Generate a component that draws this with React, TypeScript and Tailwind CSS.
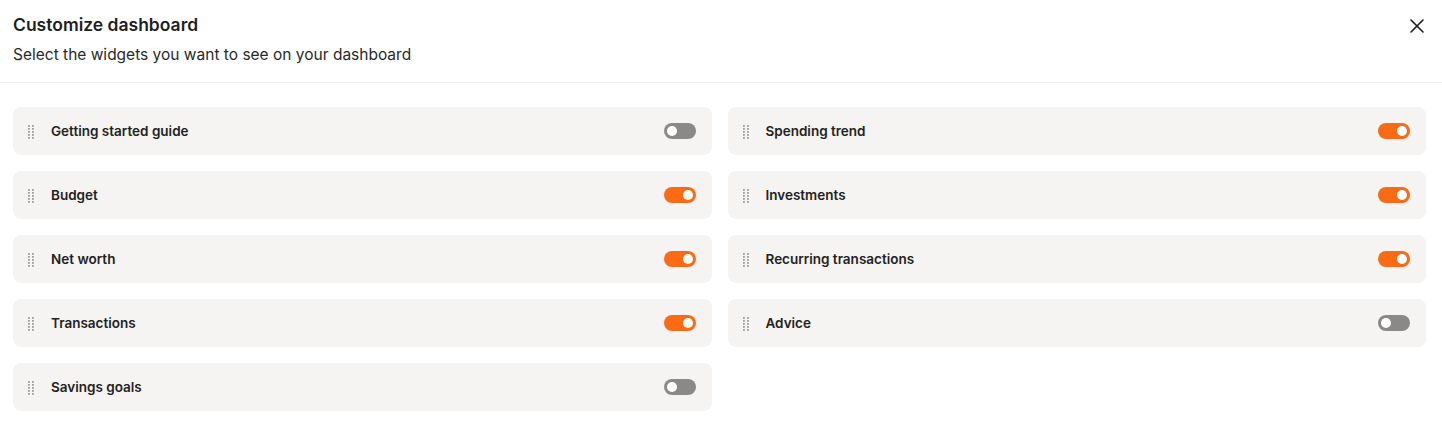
import { X } from "lucide-react";

const left = [
  { name: "Getting started guide", on: false },
  { name: "Budget", on: true },
  { name: "Net worth", on: true },
  { name: "Transactions", on: true },
  { name: "Savings goals", on: false },
];

const right = [
  { name: "Spending trend", on: true },
  { name: "Investments", on: true },
  { name: "Recurring transactions", on: true },
  { name: "Advice", on: false },
];

const DragHandle = () => (
  <svg width="8" height="15" viewBox="0 0 8 15" className="text-[#9f9d9a]">
    {[0, 1, 2, 3, 4].map((r) =>
      [0, 1].map((c) => (
        <rect key={`${r}-${c}`} x={1 + c * 4} y={1 + r * 3} width="1.8" height="1.8" fill="currentColor" />
      ))
    )}
  </svg>
);

const Toggle = ({ on }: { on: boolean }) => (
  <span
    className={`w-8 h-4 rounded-full flex items-center px-[3px] ${
      on ? "bg-[#fb6a15] justify-end" : "bg-[#8b8986] justify-start"
    }`}
  >
    <span className="size-[10px] rounded-full bg-white" />
  </span>
);

const Row = ({ name, on }: { name: string; on: boolean }) => (
  <div className="h-12 rounded-lg bg-[#f5f4f2] flex items-center pl-[14px] pr-4">
    <DragHandle />
    <span className="ml-[16px] text-[13.5px] font-semibold text-[#222]">{name}</span>
    <span className="ml-auto">
      <Toggle on={on} />
    </span>
  </div>
);

export default function App() {
  return (
    <div className="bg-white min-h-[444px] font-['Inter',sans-serif] text-[#1f1f1f]">
      <div className="flex items-start justify-between px-[13px] pt-[14px] pb-[17px] border-b border-[#efeeec]">
        <div>
          <h2 className="text-[17.5px] font-semibold leading-[22px]">Customize dashboard</h2>
          <p className="mt-[9px] text-[15.5px] leading-5 text-[#2a2a2a]">
            Select the widgets you want to see on your dashboard
          </p>
        </div>
        <X className="size-6" strokeWidth={1.6} />
      </div>
      <div className="grid grid-cols-2 gap-4 pl-[13px] pr-4 pt-6">
        <div className="flex flex-col gap-4">
          {left.map((w) => (
            <Row key={w.name} {...w} />
          ))}
        </div>
        <div className="flex flex-col gap-4">
          {right.map((w) => (
            <Row key={w.name} {...w} />
          ))}
        </div>
      </div>
    </div>
  );
}
